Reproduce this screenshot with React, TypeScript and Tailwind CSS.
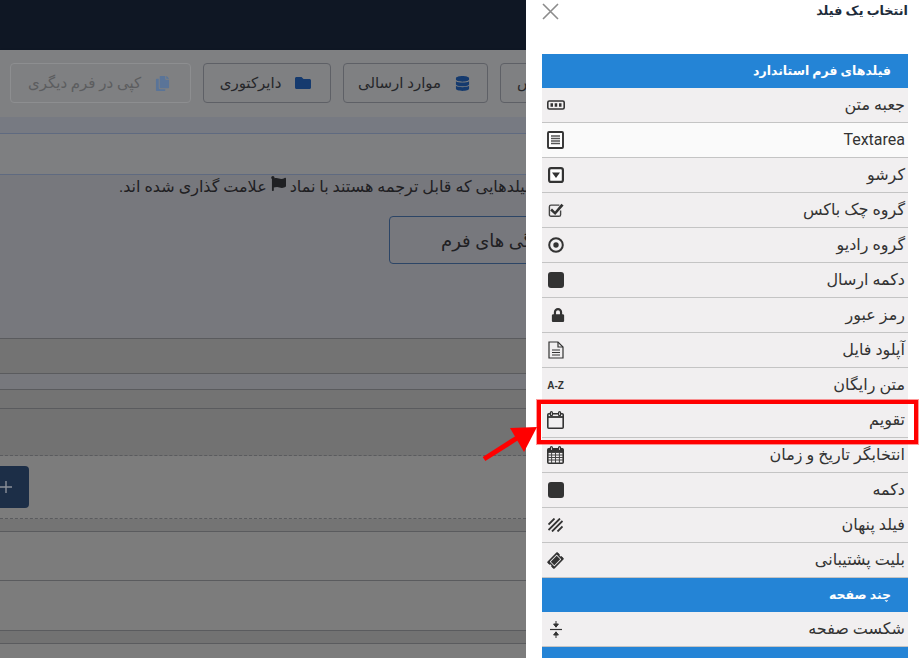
import React from 'react';
import { FaCopy, FaDatabase, FaFlag, FaFolder, FaLock, FaTicketAlt } from 'react-icons/fa';

const TextBoxIcon = () => (
  <svg width="18" height="10" viewBox="0 0 18 10">
    <rect x="0.8" y="1" width="16.4" height="8" rx="1.5" fill="none" stroke="#333" strokeWidth="1.6" />
    <path d="M3.5 3.2h2.5v3.6h-2.5zM7.7 3.2h2.5v3.6h-2.5zM12 3.2h2.5v3.6h-2.5z" fill="#333" />
  </svg>
);

const TextareaIcon = () => (
  <svg width="17" height="18" viewBox="0 0 17 18">
    <rect x="1" y="1" width="15" height="16" rx="1" fill="#fff" stroke="#333" strokeWidth="1.9" />
    <path d="M4 5h9M4 7.5h9M4 10h9M4 12.5h9" stroke="#555" strokeWidth="1.3" />
  </svg>
);

const DropdownIcon = () => (
  <svg width="16" height="16" viewBox="0 0 16 16">
    <rect x="1.1" y="1.1" width="13.8" height="13.8" rx="2" fill="#fff" stroke="#333" strokeWidth="2.2" />
    <path d="M4 5.5h8L8 11z" fill="#333" />
  </svg>
);

const CheckIcon = () => (
  <svg width="16" height="16" viewBox="0 0 16 16">
    <path d="M12.6 8.5v4.2a1.6 1.6 0 0 1-1.6 1.6H3a1.6 1.6 0 0 1-1.6-1.6V4.7A1.6 1.6 0 0 1 3 3.1h8.4" fill="none" stroke="#444" strokeWidth="1.4" />
    <path d="M4 6.6L7 9.6L13.4 1.8L15.6 3.6L7.2 13L2.2 8.4z" fill="#333" />
  </svg>
);

const RadioIcon = () => (
  <svg width="16" height="16" viewBox="0 0 16 16">
    <circle cx="8" cy="8" r="6.8" fill="none" stroke="#333" strokeWidth="2" />
    <circle cx="8" cy="8" r="2.7" fill="#333" />
  </svg>
);

const FileIcon = () => (
  <svg width="16" height="18" viewBox="0 0 16 18">
    <path d="M1 1h9l5 5v11H1z" fill="none" stroke="#333" strokeWidth="1.2" />
    <path d="M10 1v5h5" fill="none" stroke="#333" strokeWidth="1.2" />
    <path d="M4 9h8M4 11.5h8M4 14h8" stroke="#333" strokeWidth="1.1" />
  </svg>
);

const SolidSquareIcon = () => (
  <svg width="16" height="16" viewBox="0 0 16 16">
    <rect width="16" height="16" rx="3" fill="#333" />
  </svg>
);

const CalendarIcon = ({ grid }: { grid?: boolean }) => (
  <svg width="17" height="18" viewBox="0 0 17 18">
    <rect x="0.8" y="2.8" width="15.4" height="14.4" rx="1" fill="none" stroke="#333" strokeWidth="1.6" />
    <path d="M1 6h15" stroke="#333" strokeWidth="1.8" />
    {grid && <path d="M1 2.6h15v3.2H1z" fill="#333" />}
    <rect x="3.4" y="0.7" width="2" height="4" rx="1" fill="#f1eff0" stroke="#333" strokeWidth="1.2" />
    <rect x="11.6" y="0.7" width="2" height="4" rx="1" fill="#f1eff0" stroke="#333" strokeWidth="1.2" />
    {grid && <path d="M1 9h15M1 11.5h15M1 14h15M4.6 6v11M8.5 6v11M12.4 6v11" stroke="#444" strokeWidth="1" />}
  </svg>
);

const HiddenIcon = () => (
  <svg width="15" height="14" viewBox="0 0 15 14">
    <path d="M0.5 6.5L6.5 0.5M0.5 12L12 0.5M4 13.5L14.5 3M9.5 13.5L14.5 8.5" stroke="#333" strokeWidth="1.8" fill="none" />
  </svg>
);

const PageBreakIcon = () => (
  <svg width="12" height="17" viewBox="0 0 12 17">
    <path d="M0 8.5h12" stroke="#333" strokeWidth="1.2" />
    <path d="M6 0v3M3.6 3h4.8L6 6.2zM6 17v-3M3.6 14h4.8L6 10.8z" stroke="#333" strokeWidth="1" fill="#333" />
  </svg>
);

type Item = { label: string; icon: React.ReactNode; light?: boolean };

const standardFields: Item[] = [
  { label: 'جعبه متن', icon: <TextBoxIcon /> },
  { label: 'Textarea', icon: <TextareaIcon />, light: true },
  { label: 'کرشو', icon: <DropdownIcon /> },
  { label: 'گروه چک باکس', icon: <CheckIcon /> },
  { label: 'گروه رادیو', icon: <RadioIcon /> },
  { label: 'دکمه ارسال', icon: <SolidSquareIcon /> },
  { label: 'رمز عبور', icon: <FaLock size={14} color="#333" className="mr-[-4px]" /> },
  { label: 'آپلود فایل', icon: <FileIcon /> },
  { label: 'متن رایگان', icon: <span className="text-[10px] font-bold text-[#333] font-['Liberation_Sans',sans-serif]" dir="ltr">A-Z</span> },
  { label: 'تقویم', icon: <CalendarIcon /> },
  { label: 'انتخابگر تاریخ و زمان', icon: <CalendarIcon grid /> },
  { label: 'دکمه', icon: <SolidSquareIcon /> },
  { label: 'فیلد پنهان', icon: <HiddenIcon /> },
  { label: 'بلیت پشتیبانی', icon: <FaTicketAlt size={15} color="#333" className="-rotate-45" /> },
];

function Row({ label, icon, light }: Item) {
  return (
    <div className={`flex h-[35px] items-center justify-between border-b border-[#c4c4c4] pr-[3px] pl-[4px] text-[16px] text-[#333] ${light ? 'bg-[#fafafa]' : 'bg-[#f1eff0]'}`}>
      <span>{label}</span>
      <span className="flex w-[19px] justify-center">{icon}</span>
    </div>
  );
}

function GroupHeader({ label }: { label: string }) {
  return <div className="flex h-[34px] items-center bg-[#2484d6] pr-[17px] text-[12.5px] font-bold text-white">{label}</div>;
}

function ToolButton({ label, icon, width, disabled }: { label: string; icon: React.ReactNode; width: string; disabled?: boolean }) {
  return (
    <div className={`flex h-[40px] shrink-0 items-center justify-center gap-[14px] rounded-[4px] border pr-[3px] ${width} ${disabled ? 'border-[#8d8e90] text-[#5c5d5f]' : 'border-[#5e6066] text-[#26272a]'}`}>
      <span dir="rtl" className="text-[15px] whitespace-nowrap">{label}</span>
      {icon}
    </div>
  );
}

function Band({ height, bg, line = 'border-[#5a5b5e]', dashed }: { height: string; bg: string; line?: string; dashed?: boolean }) {
  return <div className={`${height} ${bg} border-b ${line} ${dashed ? 'border-dashed' : ''}`} />;
}

export default function App() {
  return (
    <div className="relative h-[658px] w-[923px] overflow-hidden bg-white font-['Roboto','DejaVu_Sans',sans-serif]">
      <div className="w-[526px] overflow-hidden">
        <div className="h-[50px] bg-[#0f1724]" />
        <div className="flex h-[67px] w-[700px] gap-[12px] bg-[#7f8082] pt-[13px] pl-[10px] shadow-sm">
          <ToolButton label="کپی در فرم دیگری" width="w-[181px]" disabled icon={<FaCopy size={15} color="#5a7498" />} />
          <ToolButton label="دایرکتوری" width="w-[128px]" icon={<FaFolder size={16} color="#153a6e" />} />
          <ToolButton label="موارد ارسالی" width="w-[145px]" icon={<FaDatabase size={15} color="#153a6e" />} />
          <div className="flex h-[40px] w-[145px] shrink-0 items-center rounded-[4px] border border-[#5e6066] pl-[16px] text-[15px] text-[#26272a]">
            <span dir="rtl">تماس</span>
          </div>
        </div>
        <Band height="h-[17px]" bg="bg-[#777a82]" line="border-[#5f6a80]" />
        <Band height="h-[41px]" bg="bg-[#7e7f81]" line="border-[#5f6a80]" />
        <div className="h-[164px] border-b border-[#5a5b5e] bg-[#77787d]">
          <div className="flex w-[800px] items-center pl-[119px] text-[16px] text-[#1f2023]">
            <span dir="rtl" className="leading-[24px] whitespace-nowrap">
              فیلدهایی که قابل ترجمه هستند با نماد <FaFlag size={15} className="inline align-[1px]" color="#1f2023" /> علامت گذاری شده اند.
            </span>
          </div>
          <div className="mt-[17px] ml-[389px] flex h-[48px] w-[260px] items-center rounded-[4px] border border-[#2c4566] pl-[51px] text-[18px] text-[#1f2023]">
            <span dir="rtl" className="whitespace-nowrap">ویژگی های فرم</span>
          </div>
        </div>
        <Band height="h-[35px]" bg="bg-[#737373]" />
        <Band height="h-[16px]" bg="bg-[#77787d]" />
        <Band height="h-[19px]" bg="bg-[#737373]" />
        <Band height="h-[47px]" bg="bg-[#727272]" dashed />
        <div className="flex h-[63px] items-center border-b border-dashed border-[#5a5b5e] bg-[#7c7c7c]">
          <div className="flex h-[42px] w-[29px] items-center rounded-r-[4px] bg-[#1c2e47]">
            <svg width="12" height="12" viewBox="0 0 12 12"><path d="M0 6h12M6 0v12" stroke="#8a9099" strokeWidth="1.4" /></svg>
          </div>
        </div>
        <Band height="h-[13px]" bg="bg-[#747474]" />
        <Band height="h-[49px]" bg="bg-[#7c7c7c]" />
        <Band height="h-[50px]" bg="bg-[#7c7c7c]" />
        <Band height="h-[13px]" bg="bg-[#727272]" />
        <div className="h-[15px] bg-[#7c7c7c]" />
      </div>

      {/* field picker drawer */}
      <div dir="rtl" className="absolute top-0 right-0 bottom-0 w-[397px] bg-white pr-[15px] pl-[16px]">
        <div className="flex h-[54px] items-start justify-between pt-[1px]">
          <span className="text-[12.8px] leading-[20px] font-bold text-[#1d2b3a]">انتخاب یک فیلد</span>
          <svg width="17" height="17" viewBox="0 0 17 17" className="mt-[2px]"><path d="M1 1l15 15M16 1L1 16" stroke="#8c8c8c" strokeWidth="1.6" /></svg>
        </div>
        <GroupHeader label="فیلدهای فرم استاندارد" />
        {standardFields.map((item) => <Row key={item.label} {...item} />)}
        <GroupHeader label="چند صفحه" />
        <Row label="شکست صفحه" icon={<PageBreakIcon />} />
        <GroupHeader label="فیلدهای اضافی" />
      </div>

      {/* annotation on top of the screenshot */}
      <div className="absolute top-[400px] left-[537px] h-[44px] w-[381px] border-[4px] border-[#ff0000] ring-1 ring-[#ff0000]/40" />
      <svg className="absolute top-[420px] left-[480px]" width="60" height="45" viewBox="0 0 60 45">
        <path d="M4 39L37 18" stroke="#ff0000" strokeWidth="5" fill="none" />
        <path d="M30 8L57 7L44 32z" fill="#ff0000" />
      </svg>
    </div>
  );
}
